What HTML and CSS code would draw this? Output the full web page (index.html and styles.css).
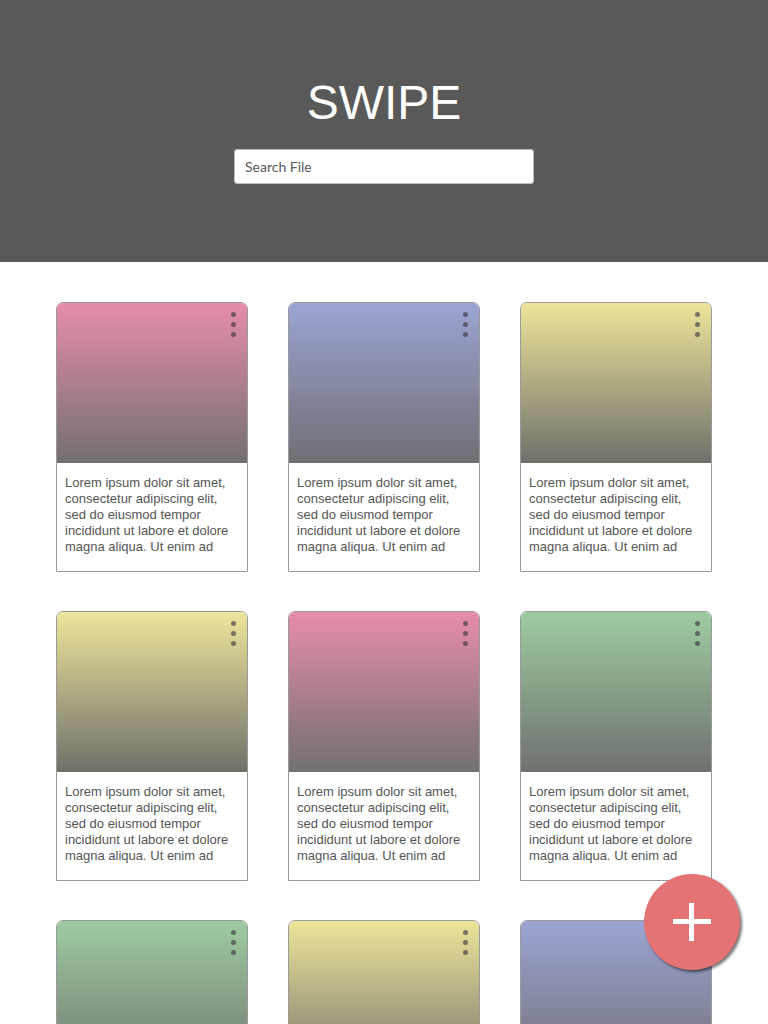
FILE: index.html
```html
<!DOCTYPE html>
<html>
<head>
<meta charset="utf-8">
<link rel="stylesheet" href="styles.css">
</head>
<body>
<header class="hero">
  <h1 class="title">SWIPE</h1>
  <input class="search" type="text" placeholder="Search File">
</header>
<main class="grid">
  <div class="card"><div class="thumb pink"><span class="more"><i></i><i></i><i></i></span></div><p class="desc">Lorem ipsum dolor sit amet, consectetur adipiscing elit, sed do eiusmod tempor incididunt ut labore et dolore magna aliqua. Ut enim ad</p></div>
  <div class="card"><div class="thumb blue"><span class="more"><i></i><i></i><i></i></span></div><p class="desc">Lorem ipsum dolor sit amet, consectetur adipiscing elit, sed do eiusmod tempor incididunt ut labore et dolore magna aliqua. Ut enim ad</p></div>
  <div class="card"><div class="thumb yellow"><span class="more"><i></i><i></i><i></i></span></div><p class="desc">Lorem ipsum dolor sit amet, consectetur adipiscing elit, sed do eiusmod tempor incididunt ut labore et dolore magna aliqua. Ut enim ad</p></div>
  <div class="card"><div class="thumb yellow"><span class="more"><i></i><i></i><i></i></span></div><p class="desc">Lorem ipsum dolor sit amet, consectetur adipiscing elit, sed do eiusmod tempor incididunt ut labore et dolore magna aliqua. Ut enim ad</p></div>
  <div class="card"><div class="thumb pink"><span class="more"><i></i><i></i><i></i></span></div><p class="desc">Lorem ipsum dolor sit amet, consectetur adipiscing elit, sed do eiusmod tempor incididunt ut labore et dolore magna aliqua. Ut enim ad</p></div>
  <div class="card"><div class="thumb green"><span class="more"><i></i><i></i><i></i></span></div><p class="desc">Lorem ipsum dolor sit amet, consectetur adipiscing elit, sed do eiusmod tempor incididunt ut labore et dolore magna aliqua. Ut enim ad</p></div>
  <div class="card"><div class="thumb green"><span class="more"><i></i><i></i><i></i></span></div><p class="desc">Lorem ipsum dolor sit amet, consectetur adipiscing elit, sed do eiusmod tempor incididunt ut labore et dolore magna aliqua. Ut enim ad</p></div>
  <div class="card"><div class="thumb yellow"><span class="more"><i></i><i></i><i></i></span></div><p class="desc">Lorem ipsum dolor sit amet, consectetur adipiscing elit, sed do eiusmod tempor incididunt ut labore et dolore magna aliqua. Ut enim ad</p></div>
  <div class="card"><div class="thumb blue"><span class="more"><i></i><i></i><i></i></span></div><p class="desc">Lorem ipsum dolor sit amet, consectetur adipiscing elit, sed do eiusmod tempor incididunt ut labore et dolore magna aliqua. Ut enim ad</p></div>
</main>
<button class="fab" aria-label="Add"><span class="plus"></span></button>
</body>
</html>
```
FILE: styles.css
```css
html, body {
  margin: 0;
  padding: 0;
  background: #fff;
  font-family: "Liberation Sans", Arial, sans-serif;
  overflow: hidden;
  height: 1024px;
}
.hero {
  height: 262px;
  background: #595959;
  display: flex;
  flex-direction: column;
  align-items: center;
  box-sizing: border-box;
  padding-top: 76px;
}
.title {
  margin: 0;
  color: #fff;
  font-weight: normal;
  font-size: 48px;
  line-height: 54px;
  letter-spacing: 0;
}
.search {
  margin-top: 19px;
  width: 300px;
  height: 35px;
  box-sizing: border-box;
  border: 1px solid #bdbdbd;
  border-radius: 3px;
  background: #fff;
  padding: 0 10px 1px 10px;
  font-family: "Lato", "Open Sans", sans-serif;
  font-size: 14px;
  color: #555;
  outline: none;
}
.search::placeholder {
  color: #5a5a5a;
}
.grid {
  display: grid;
  grid-template-columns: repeat(3, 192px);
  column-gap: 40px;
  row-gap: 39px;
  padding: 40px 56px;
}
.card {
  border: 1px solid #9a9a9a;
  border-radius: 7px 7px 0 0;
  overflow: hidden;
  background: #fff;
  height: 270px;
  box-sizing: border-box;
}
.thumb {
  height: 160px;
  position: relative;
}
.pink { background: linear-gradient(#e68dac, #737070); }
.blue { background: linear-gradient(#9ca4d3, #6f6f73); }
.yellow { background: linear-gradient(#ede59b, #70706a); }
.green { background: linear-gradient(#9ecca0, #6f716f); }
.more {
  position: absolute;
  top: 9px;
  right: 11px;
  display: flex;
  flex-direction: column;
  gap: 5px;
}
.more i {
  display: block;
  width: 5px;
  height: 5px;
  border-radius: 50%;
  background: rgba(60, 55, 65, 0.65);
}
.desc {
  margin: 0;
  padding: 12px 8px 0 8px;
  font-size: 13px;
  line-height: 16px;
  color: #555;
}
.fab {
  position: fixed;
  right: 28px;
  bottom: 54px;
  width: 96px;
  height: 96px;
  border-radius: 50%;
  border: none;
  background: #e57373;
  box-shadow: 2px 2px 3px rgba(0, 0, 0, 0.55);
  padding: 0;
  display: flex;
  align-items: center;
  justify-content: center;
}
.plus {
  position: relative;
  width: 38px;
  height: 38px;
}
.plus::before, .plus::after {
  content: "";
  position: absolute;
  background: #fff;
}
.plus::before {
  left: 0;
  right: 0;
  top: 16px;
  height: 5px;
}
.plus::after {
  top: 0;
  bottom: 0;
  left: 16px;
  width: 5px;
}
```
